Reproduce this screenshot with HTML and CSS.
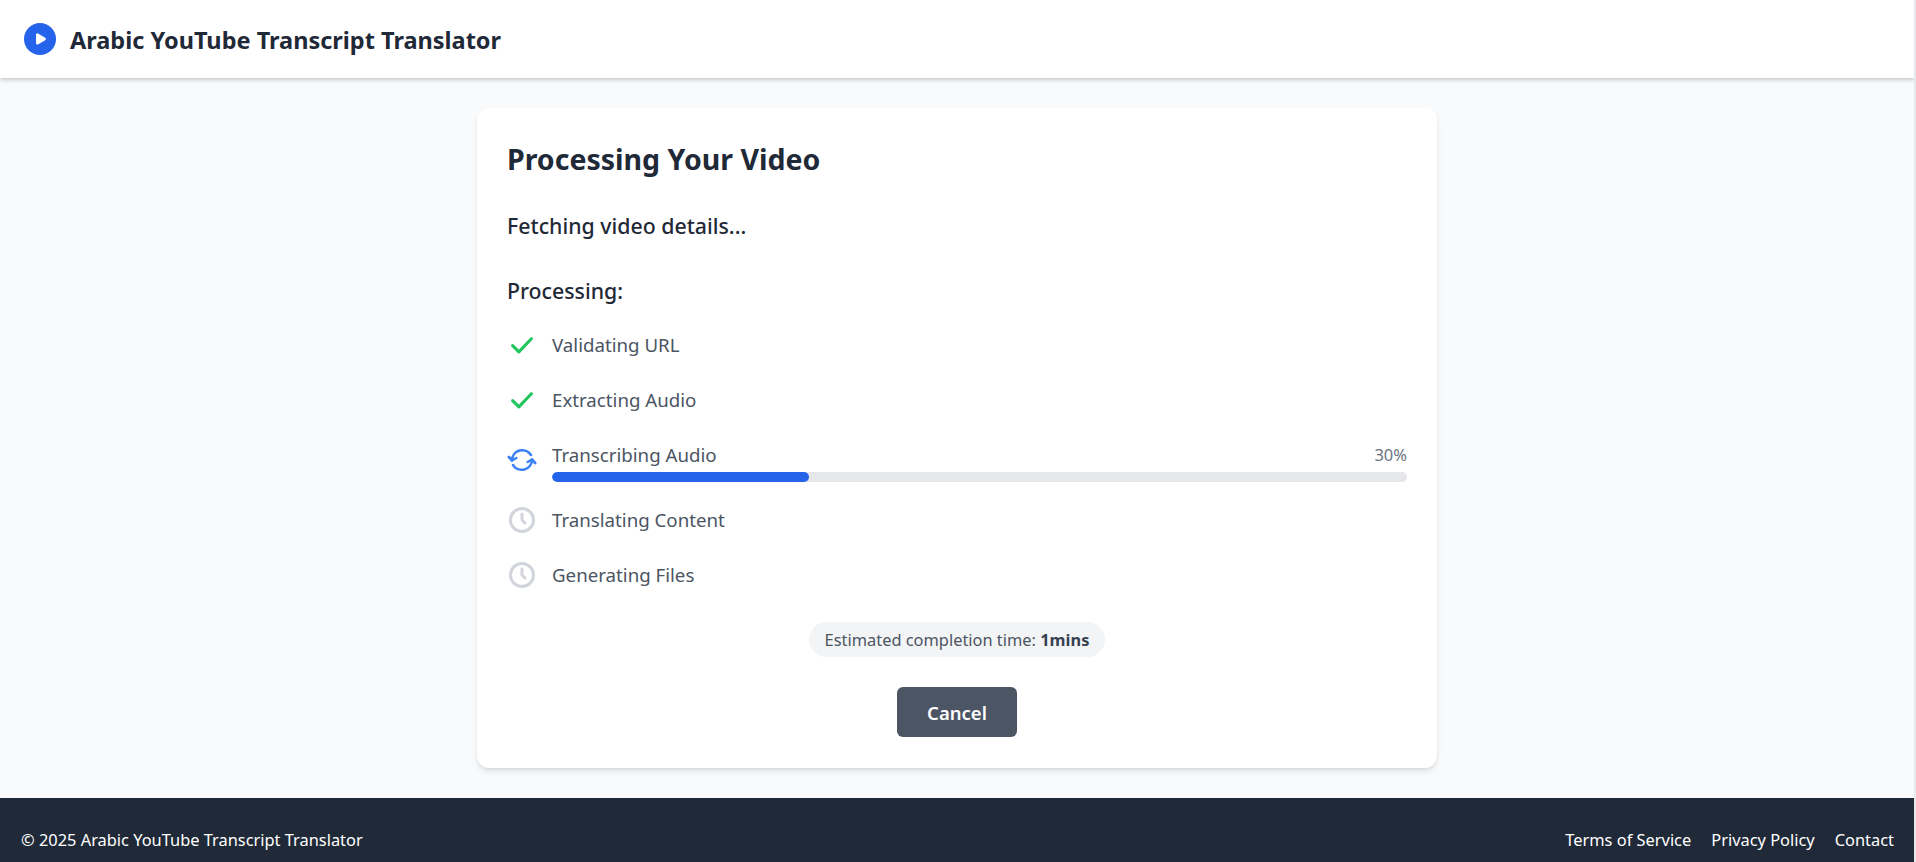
FILE: index.html
```html
<!DOCTYPE html>
<html lang="en">
<head>
  <meta charset="UTF-8">
  <meta name="viewport" content="width=device-width, initial-scale=1.0">
  <title>Arabic YouTube Transcript Translator</title>
  <link rel="stylesheet" href="styles.css">
</head>
<body>

  <header class="site-header">
    <svg class="logo" viewBox="0 0 24 24"><circle cx="12" cy="12" r="12" fill="#2563eb"/><path d="M10 8.800v6.400l5.400-3.200z" fill="#fff" stroke="#fff" stroke-width="2" stroke-linejoin="round"/></svg>
    <span class="site-title">Arabic YouTube Transcript Translator</span>
  </header>

  <main class="content">
    <section class="card">
      <h1>Processing Your Video</h1>
      <p class="status">Fetching video details...</p>
      <h2>Processing:</h2>

      <ul class="steps">
        <li class="step">
          <svg class="icon done" viewBox="0 0 24 24"><path d="M4.500 12.500l5 5L19.500 7"/></svg>
          <div class="step-body"><span>Validating URL</span></div>
        </li>
        <li class="step">
          <svg class="icon done" viewBox="0 0 24 24"><path d="M4.500 12.500l5 5L19.500 7"/></svg>
          <div class="step-body"><span>Extracting Audio</span></div>
        </li>
        <li class="step">
          <svg class="icon active" viewBox="0 0 30 30"><path d="M5 15.500A10.300 10.300 0 0 1 24 10"/><path d="M25 14.500A10.300 10.300 0 0 1 6 20"/><path d="M1.800 12L5 15.500l4.300-2.500"/><path d="M28.200 18L25 14.500 20.700 17"/></svg>
          <div class="step-body">
            <div class="step-row"><span>Transcribing Audio</span><span class="percent">30%</span></div>
            <div class="bar"><div class="bar-fill" style="width: 30%"></div></div>
          </div>
        </li>
        <li class="step">
          <svg class="icon waiting" viewBox="0 0 30 30"><circle cx="15" cy="15" r="11.500"/><path d="M15 9v6l3 3"/></svg>
          <div class="step-body"><span>Translating Content</span></div>
        </li>
        <li class="step">
          <svg class="icon waiting" viewBox="0 0 30 30"><circle cx="15" cy="15" r="11.500"/><path d="M15 9v6l3 3"/></svg>
          <div class="step-body"><span>Generating Files</span></div>
        </li>
      </ul>

      <div class="estimate-wrap">
        <div class="estimate">Estimated completion time: <b>1mins</b></div>
      </div>
      <div class="actions">
        <button class="cancel">Cancel</button>
      </div>
    </section>
  </main>

  <footer class="site-footer">
    <span>© 2025 Arabic YouTube Transcript Translator</span>
    <nav class="footer-links">
      <a href="#">Terms of Service</a>
      <a href="#">Privacy Policy</a>
      <a href="#">Contact</a>
    </nav>
  </footer>

</body>
</html>
```

FILE: styles.css
```css
* {
  box-sizing: border-box;
}

html, body {
  height: 862px;
  overflow: hidden;
}

html {
  background-color: #e5e7eb;
}

body {
  width: 1914px;
  margin: 0;
  font-family: "Noto Sans", sans-serif;
  background-color: #f9fafb;
  color: #1f2937;
  display: flex;
  flex-direction: column;
}

/* Header */
.site-header {
  height: 78px;
  background-color: #fff;
  box-shadow: 0 2px 4px rgba(0, 0, 0, 0.2);
  display: flex;
  align-items: center;
  gap: 14px;
  padding-left: 24px;
}

.logo {
  width: 32px;
  height: 32px;
}

.site-title {
  font-size: 23.500px;
  font-weight: 700;
  padding-top: 2px;
}

/* Card */
.content {
  flex: 1;
  padding-top: 30px;
}

.card {
  width: 960px;
  height: 660px;
  margin: 0 auto;
  padding: 30px;
  background-color: #fff;
  border-radius: 12px;
  box-shadow: 0 4px 6px -1px rgba(0, 0, 0, 0.1), 0 2px 4px -2px rgba(0, 0, 0, 0.1);
}

h1 {
  margin: 0;
  font-size: 28.500px;
  line-height: 42px;
  font-weight: 700;
}

.status {
  margin: 30px 0 0;
  font-size: 21.300px;
  line-height: 32px;
  font-weight: 500;
}

h2 {
  margin: 33px 0 0;
  font-size: 21.300px;
  line-height: 32px;
  font-weight: 500;
}

/* Steps */
.steps {
  list-style: none;
  margin: 22px 0 0;
  padding: 0;
  display: flex;
  flex-direction: column;
  gap: 24px;
}

.step {
  display: flex;
  align-items: center;
  gap: 15px;
  font-size: 18.700px;
  line-height: 31px;
  color: #4b5563;
}

.step-body {
  flex: 1;
}

.step-row {
  display: flex;
  justify-content: space-between;
}

.percent {
  font-size: 16.500px;
  color: #6b7280;
}

.icon {
  width: 30px;
  height: 30px;
  fill: none;
  stroke-width: 2.500;
  stroke-linecap: round;
  stroke-linejoin: round;
}

.icon.done {
  stroke: #22c55e;
}

.icon.active {
  stroke: #3b82f6;
  stroke-width: 2.600;
}

.icon.waiting {
  stroke: #d1d5db;
  stroke-width: 3;
}

.bar {
  height: 10px;
  margin: 2px 0 -2px;
  background-color: #e5e7eb;
  border-radius: 5px;
  overflow: hidden;
}

.bar-fill {
  height: 100%;
  background-color: #2563eb;
  border-radius: 5px;
}

/* Estimate and cancel */
.estimate-wrap {
  display: flex;
  justify-content: center;
  margin-top: 32px;
}

.estimate {
  padding: 4px 16px;
  background-color: #f3f4f6;
  border-radius: 18px;
  font-size: 16.400px;
  line-height: 27px;
  color: #4b5563;
}

.estimate b {
  color: #374151;
}

.actions {
  display: flex;
  justify-content: center;
  margin-top: 30px;
}

.cancel {
  width: 120px;
  height: 50px;
  border: none;
  border-radius: 6px;
  background-color: #4b5563;
  color: #fff;
  font-family: inherit;
  font-size: 18.500px;
  font-weight: 600;
}

/* Footer */
.site-footer {
  height: 64px;
  background-color: #1f2937;
  color: #fff;
  font-size: 16.400px;
  display: flex;
  justify-content: space-between;
  align-items: flex-end;
  padding: 0 20px 11px 21px;
}

.footer-links {
  display: flex;
  gap: 20px;
}

.footer-links a {
  color: #fff;
  text-decoration: none;
}
```
